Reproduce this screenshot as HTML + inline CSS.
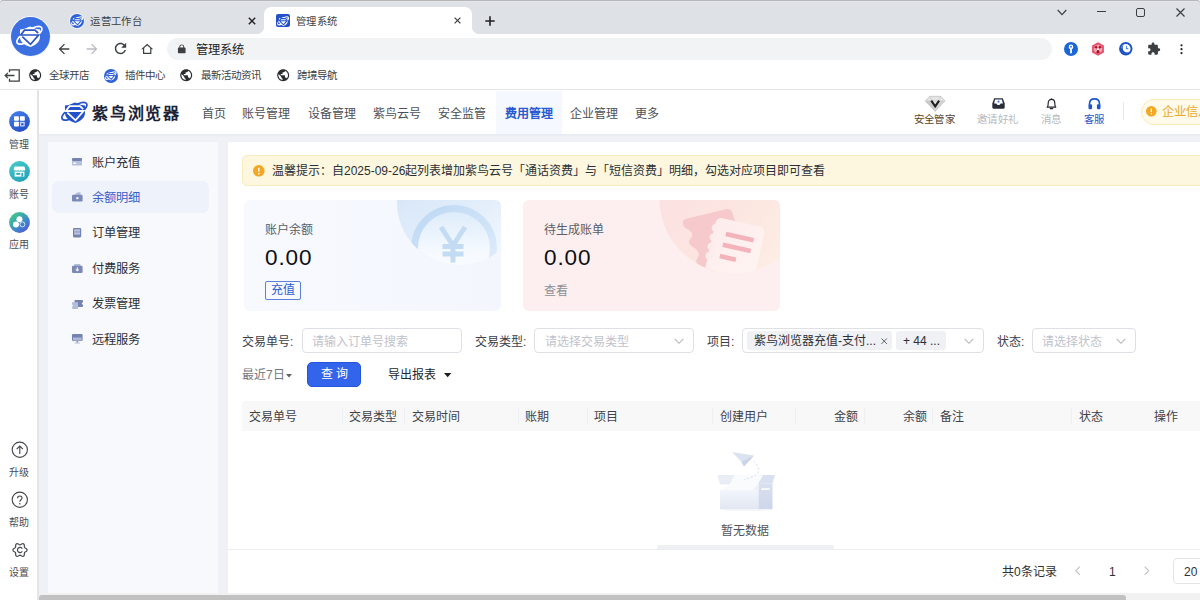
<!DOCTYPE html>
<html lang="zh-CN">
<head>
<meta charset="utf-8">
<title>管理系统</title>
<style>
*{box-sizing:border-box;margin:0;padding:0}
html,body{width:1200px;height:600px;overflow:hidden;background:#fff}
body{font-family:"Liberation Sans",sans-serif;font-size:12.25px;color:#303133;position:relative}
.a{position:absolute;white-space:nowrap}
.t{position:absolute;white-space:nowrap;line-height:16px;height:16px}
.j{text-align-last:justify}
svg{position:absolute;overflow:visible}
/* ---------- browser chrome ---------- */
#tabstrip{left:0;top:0;width:1200px;height:34px;background:#dee1e6;border-radius:3px 3px 0 0;box-shadow:inset 0 1px 0 #b4b6ba,inset 0 2px 0 #e5e7ea}
#tabact{left:264px;top:7px;width:208px;height:27px;background:#fff;border-radius:7px 7px 0 0}
#toolbar{left:0;top:34px;width:1200px;height:28px;background:#fff}
#omni{left:167px;top:38px;width:885px;height:22px;border-radius:11px;background:#f1f3f4}
#bookbar{left:0;top:62px;width:1200px;height:28px;background:#fff;border-bottom:1px solid #e4e6ea}
.tabt{letter-spacing:.35px;font-size:10.3px;color:#3c4043}
.bm{letter-spacing:.2px;font-size:10.5px;color:#3c4043}
/* ---------- left app rail ---------- */
#rail{left:0;top:90px;width:38px;height:510px;background:#fff}
#railline{left:37.3px;top:90px;width:1.7px;height:510px;background:#e3e5e9}
.rl{font-size:10px;color:#4a4d52;width:38px;text-align:center;left:0}
/* ---------- page ---------- */
#page{left:39px;top:90px;width:1161px;height:503px;background:#f0f1f6}
#hdr{left:39px;top:90px;width:1161px;height:43.7px;background:#fff;box-shadow:0 1px 2px rgba(160,170,195,.12)}
.nav{font-size:12px;color:#4b4f56;top:106px}
#side{left:47.7px;top:142.3px;width:170.5px;height:451px;background:#f8f9fd}
#sel{left:52px;top:181px;width:157px;height:32px;border-radius:7px;background:#eef2fb}
.mi{left:92px;font-size:12.25px;color:#2b2f36}
#main{left:227.7px;top:142.3px;width:973px;height:451px;background:#fff}
/* main content */
#alert{left:242px;top:154.8px;width:980px;height:31.6px;background:#fdf7df;border:1px solid #f8ebbd;border-radius:5px}
.card{top:200px;width:257px;height:110.6px;border-radius:6px;overflow:hidden}
#c1{left:244px;background:linear-gradient(90deg,#f7f9fe,#f3f7fd)}
#c2{left:523.2px;background:#fdeff0}
.cl{font-size:12px;color:#5a5e66}
.cv{font-size:22.5px;color:#0d0f12;line-height:26px;height:26px;letter-spacing:.9px}
.fl{font-size:12px;color:#3d4047;top:334.2px}
.inp{top:328.3px;height:24.8px;border:1px solid #dee0e5;border-radius:4px;background:#fff}
.ph{font-size:12px;color:#bfc3cb;top:334px}
.tag{top:331px;height:19px;background:#f0f1f4;border-radius:3px}
#th{left:242px;top:400.5px;width:958px;height:30px;background:#f8f8f9;border-radius:4px 0 0 0}
.th{font-size:12px;font-weight:500;color:#3f4247;top:409px}
.sep{top:407.5px;width:1px;height:16px;background:#eef0f3}
#pgline{left:228px;top:549px;width:972px;height:1px;background:#ebedf0}
#hs{left:657px;top:545px;width:177px;height:4px;background:#eff0f3;border-radius:2px 2px 0 0}
.pg{font-size:12px;color:#303133;top:563.7px}
#sbtrack{left:39px;top:593.4px;width:1161px;height:7px;background:#f1f1f1}
#sbthumb{left:39px;top:594.6px;width:1087px;height:6px;background:#c1c1c1;border-radius:3px 3px 0 0}
</style>
</head>
<body>
<!-- ======= Browser chrome ======= -->
<div class="a" id="tabstrip"></div>
<div class="a" id="tabact"></div>
<div class="a" style="left:257px;top:27px;width:7px;height:7px;background:radial-gradient(circle at 0 0,#dee1e6 6.6px,#fff 7.2px)"></div>
<div class="a" style="left:472px;top:27px;width:7px;height:7px;background:radial-gradient(circle at 100% 0,#dee1e6 6.6px,#fff 7.2px)"></div>
<div class="a" id="toolbar"></div>
<div class="a" id="omni"></div>
<div class="a" id="bookbar"></div>
<div class="t tabt j" style="left:90.2px;top:14.3px;width:51.75px">运营工作台</div>
<div class="t tabt j" style="left:296px;top:14.3px;width:41.41px">管理系统</div>
<div class="t j" style="left:195.7px;top:42.2px;font-size:12.25px;color:#202124;width:48.00px">管理系统</div>
<div class="t bm j" style="left:48.5px;top:67.4px;width:40.82px">全球开店</div>
<div class="t bm j" style="left:124.5px;top:67.4px;width:40.82px">插件中心</div>
<div class="t bm j" style="left:200.5px;top:67.4px;width:61.21px">最新活动资讯</div>
<div class="t bm j" style="left:296.5px;top:67.4px;width:40.82px">跨境导航</div>


<!-- ======= Chrome icons ======= -->
<div class="a" style="left:10px;top:15.8px;width:41px;height:41px;border-radius:50%;background:#f4f6fb"></div>
<div class="a" style="left:11px;top:16.8px;width:39px;height:39px;border-radius:50%;background:#3b6fe2"></div>
<svg style="left:11.4px;top:21.6px;width:40.00px;height:30.00px" viewBox="0 0 40 30"><ellipse cx="18.4" cy="13.3" rx="14.4" ry="5.2" transform="rotate(-32 18.4 13.3)" fill="none" stroke="#fff" stroke-width="1.7"/><path d="M9,7.5 Q14,7 19,4.5 Q24,7 29,7.5 V15 C29,20 24,23.5 19.5,25 C14,23.5 9,20 9,15 Z" fill="#fff"/><path d="M27.2,11.2 L24,8.2 H13.5 L9.8,13 H27.6 L19.5,22.3 L11.3,14.6" fill="none" stroke="#2a55c4" stroke-width="1.7"/></svg>
<div class="a" style="left:69px;top:12.5px;width:16px;height:16px;border-radius:50%;background:#eef1f8"></div>
<div class="a" style="left:70px;top:13.5px;width:14px;height:14px;border-radius:50%;background:#2f62d8"></div>
<svg style="left:68.9px;top:14.65px;width:17.60px;height:13.20px" viewBox="0 0 40 30"><ellipse cx="18.4" cy="13.3" rx="14.4" ry="5.2" transform="rotate(-32 18.4 13.3)" fill="none" stroke="#fff" stroke-width="2.4"/><path d="M9,7.5 Q14,7 19,4.5 Q24,7 29,7.5 V15 C29,20 24,23.5 19.5,25 C14,23.5 9,20 9,15 Z" fill="#fff"/><path d="M27.2,11.2 L24,8.2 H13.5 L9.8,13 H27.6 L19.5,22.3 L11.3,14.6" fill="none" stroke="#2f62d8" stroke-width="2.5"/></svg>
<div class="a" style="left:276px;top:14px;width:14px;height:13px;border-radius:2px;background:#2351c6"></div>
<svg style="left:274.9px;top:14.65px;width:17.60px;height:13.20px" viewBox="0 0 40 30"><ellipse cx="18.4" cy="13.3" rx="14.4" ry="5.2" transform="rotate(-32 18.4 13.3)" fill="none" stroke="#fff" stroke-width="2.4"/><path d="M9,7.5 Q14,7 19,4.5 Q24,7 29,7.5 V15 C29,20 24,23.5 19.5,25 C14,23.5 9,20 9,15 Z" fill="#fff"/><path d="M27.2,11.2 L24,8.2 H13.5 L9.8,13 H27.6 L19.5,22.3 L11.3,14.6" fill="none" stroke="#2351c6" stroke-width="2.5"/></svg>
<div class="a" style="left:103.5px;top:69px;width:14px;height:14px;border-radius:50%;background:#2f62d8"></div>
<svg style="left:102.9px;top:70.4px;width:16.80px;height:12.60px" viewBox="0 0 40 30"><ellipse cx="18.4" cy="13.3" rx="14.4" ry="5.2" transform="rotate(-32 18.4 13.3)" fill="none" stroke="#fff" stroke-width="2.4"/><path d="M9,7.5 Q14,7 19,4.5 Q24,7 29,7.5 V15 C29,20 24,23.5 19.5,25 C14,23.5 9,20 9,15 Z" fill="#fff"/><path d="M27.2,11.2 L24,8.2 H13.5 L9.8,13 H27.6 L19.5,22.3 L11.3,14.6" fill="none" stroke="#2f62d8" stroke-width="2.5"/></svg>
<svg style="left:248px;top:16.5px;width:8px;height:8px" viewBox="0 0 8 8"><path d="M0.8,0.8 L7.2,7.2 M7.2,0.8 L0.8,7.2" stroke="#202124" stroke-width="1.4"/></svg>
<svg style="left:454px;top:17px;width:7px;height:7px" viewBox="0 0 7 7"><path d="M0.6,0.6 L6.4,6.4 M6.4,0.6 L0.6,6.4" stroke="#3c4043" stroke-width="1.2"/></svg>
<svg style="left:485px;top:15.5px;width:10px;height:10px" viewBox="0 0 10 10"><path d="M5,0.3 V9.7 M0.3,5 H9.7" stroke="#202124" stroke-width="1.6"/></svg>
<!-- window controls -->
<svg style="left:1057px;top:8.5px;width:10px;height:7px" viewBox="0 0 10 7"><path d="M0.7,1 L5,5.6 L9.3,1" fill="none" stroke="#3c4043" stroke-width="1.2"/></svg>
<div class="a" style="left:1097px;top:11px;width:9px;height:1.4px;background:#3c4043"></div>
<div class="a" style="left:1136px;top:7.5px;width:9px;height:9px;border:1.2px solid #3c4043;border-radius:2px"></div>
<svg style="left:1176px;top:7.5px;width:9px;height:9px" viewBox="0 0 9 9"><path d="M0.5,0.5 L8.5,8.5 M8.5,0.5 L0.5,8.5" stroke="#3c4043" stroke-width="1.2"/></svg>
<!-- nav buttons -->
<svg style="left:56.2px;top:40.7px;width:16px;height:16px" viewBox="0 0 24 24"><path fill="#3c4043" d="M20 11H7.83l5.59-5.59L12 4l-8 8 8 8 1.41-1.41L7.83 13H20v-2z"/></svg>
<svg style="left:84.4px;top:40.7px;width:16px;height:16px" viewBox="0 0 24 24"><path fill="#b9bcc0" d="M12 4l-1.41 1.41L16.17 11H4v2h12.17l-5.58 5.59L12 20l8-8z"/></svg>
<svg style="left:111.5px;top:40px;width:17px;height:17px" viewBox="0 0 24 24"><path fill="#3c4043" d="M17.65 6.35C16.2 4.9 14.21 4 12 4c-4.42 0-7.99 3.58-7.99 8s3.57 8 7.99 8c3.73 0 6.84-2.55 7.73-6h-2.08c-.82 2.33-3.04 4-5.65 4-3.31 0-6-2.69-6-6s2.69-6 6-6c1.66 0 3.14.69 4.22 1.78L13 11h7V4l-2.35 2.35z"/></svg>
<svg style="left:140.2px;top:41.8px;width:14.4px;height:14.4px" viewBox="0 0 24 24"><path fill="#3c4043" d="M12 5.69l5 4.5V18H7v-7.81l5-4.5M12 3L2 12h3v8h14v-8h3L12 3z"/></svg>
<svg style="left:175.9px;top:44.2px;width:11.5px;height:10.2px" viewBox="0 0 24 24" preserveAspectRatio="none"><path fill="#3c4043" d="M18 8h-1V6c0-2.76-2.24-5-5-5S7 3.24 7 6v2H6c-1.1 0-2 .9-2 2v10c0 1.1.9 2 2 2h12c1.1 0 2-.9 2-2V10c0-1.1-.9-2-2-2zm-2.9 0H8.9V6c0-1.71 1.39-3.1 3.1-3.1 1.71 0 3.1 1.39 3.1 3.1v2z"/></svg>
<!-- extensions -->
<svg style="left:1064px;top:42px;width:14px;height:14px" viewBox="0 0 14 14"><circle cx="7" cy="7" r="7" fill="#1b66d6"/><circle cx="7" cy="4.9" r="2.3" fill="#fff"/><rect x="6.1" y="6" width="1.8" height="5.3" fill="#fff"/><circle cx="7" cy="4.7" r="0.9" fill="#1b66d6"/></svg>
<svg style="left:1091.4px;top:42px;width:14px;height:14px" viewBox="0 0 14 14"><path d="M7,0.2 L12.9,3.6 V10.4 L7,13.8 L1.1,10.4 V3.6 Z" fill="#e5506a"/><circle cx="7" cy="7" r="4.300" fill="#f3a3b1"/><path d="M7,7 L3.300,5.800 A3.900,3.900 0 0 1 5.600,3.400 Z M7,7 L8.400,3.400 A3.900,3.900 0 0 1 10.700,5.800 Z M7,7 L8.900,10.400 A3.900,3.900 0 0 1 5.100,10.400 Z" fill="#a5122c"/><circle cx="7" cy="7" r="1" fill="#fff"/></svg>
<svg style="left:1119.2px;top:42.2px;width:13.6px;height:13.6px" viewBox="0 0 14 14"><circle cx="7" cy="7" r="6.900" fill="#1a52c2"/><circle cx="7" cy="7" r="4.900" fill="#fff"/><path d="M2.400,5.600 A4.700,4.700 0 0 0 11,9.600 A4.300,4.300 0 0 1 5.200,3.200 A4.700,4.700 0 0 0 2.400,5.600 Z" fill="#1a52c2"/><path d="M7.600,3.800 V6.800 H9.600" fill="none" stroke="#4f8fea" stroke-width="1.100"/></svg>
<svg style="left:1146.7px;top:42px;width:13.8px;height:13.8px" viewBox="0 0 24 24"><path fill="#3c4043" d="M20.5 11H19V7c0-1.1-.9-2-2-2h-4V3.5C13 2.12 11.88 1 10.5 1S8 2.12 8 3.5V5H4c-1.1 0-1.99.9-1.99 2v3.8H3.5c1.49 0 2.7 1.21 2.7 2.7s-1.21 2.7-2.7 2.7H2V20c0 1.1.9 2 2 2h3.8v-1.5c0-1.49 1.21-2.7 2.7-2.7 1.49 0 2.7 1.21 2.7 2.7V22H17c1.1 0 2-.9 2-2v-4h1.5c1.38 0 2.5-1.12 2.5-2.5S21.88 11 20.5 11z"/></svg>
<svg style="left:1179.5px;top:44px;width:3px;height:11px" viewBox="0 0 3 11"><circle cx="1.5" cy="1.3" r="1.1" fill="#202124"/><circle cx="1.5" cy="5.2" r="1.1" fill="#202124"/><circle cx="1.5" cy="9.1" r="1.1" fill="#202124"/></svg>
<!-- bookmarks -->
<svg style="left:3.5px;top:68.5px;width:16px;height:13px" viewBox="0 0 16 13"><path d="M5.5,3.2 V0.8 H15.2 V12.2 H5.5 V9.8" fill="none" stroke="#3c4043" stroke-width="1.3"/><path d="M10.5,6.5 H1.2 M3.9,3.9 L1.2,6.5 L3.9,9.1" fill="none" stroke="#3c4043" stroke-width="1.3"/></svg>
<svg style="left:27.8px;top:68.3px;width:14.4px;height:14.4px" viewBox="0 0 24 24"><path fill="#2b2d30" d="M12 2C6.48 2 2 6.48 2 12s4.48 10 10 10 10-4.48 10-10S17.52 2 12 2zm-1 17.93c-3.950-.49-7-3.850-7-7.930 0-.62.080-1.210.210-1.790L9 15v1c0 1.100.9 2 2 2v1.930zm6.900-2.540c-.26-.81-1-1.390-1.900-1.390h-1v-3c0-.55-.45-1-1-1H8v-2h2c.55 0 1-.45 1-1V7h2c1.100 0 2-.9 2-2v-.41c2.930 1.190 5 4.060 5 7.410 0 2.080-.8 3.970-2.100 5.390z"/></svg>
<svg style="left:178.8px;top:68.3px;width:14.4px;height:14.4px" viewBox="0 0 24 24"><path fill="#2b2d30" d="M12 2C6.48 2 2 6.48 2 12s4.48 10 10 10 10-4.48 10-10S17.52 2 12 2zm-1 17.93c-3.950-.49-7-3.850-7-7.930 0-.62.080-1.210.210-1.790L9 15v1c0 1.100.9 2 2 2v1.930zm6.900-2.540c-.26-.81-1-1.390-1.900-1.390h-1v-3c0-.55-.45-1-1-1H8v-2h2c.55 0 1-.45 1-1V7h2c1.100 0 2-.9 2-2v-.41c2.930 1.190 5 4.060 5 7.410 0 2.080-.8 3.970-2.100 5.390z"/></svg>
<svg style="left:275.8px;top:68.3px;width:14.4px;height:14.4px" viewBox="0 0 24 24"><path fill="#2b2d30" d="M12 2C6.48 2 2 6.48 2 12s4.48 10 10 10 10-4.48 10-10S17.52 2 12 2zm-1 17.93c-3.950-.49-7-3.850-7-7.930 0-.62.080-1.210.210-1.790L9 15v1c0 1.100.9 2 2 2v1.930zm6.900-2.540c-.26-.81-1-1.390-1.900-1.390h-1v-3c0-.55-.45-1-1-1H8v-2h2c.55 0 1-.45 1-1V7h2c1.100 0 2-.9 2-2v-.41c2.930 1.190 5 4.060 5 7.410 0 2.080-.8 3.970-2.100 5.390z"/></svg>

<!-- ======= Left rail ======= -->
<div class="a" id="rail"></div>
<div class="a" id="railline"></div>
<div class="t rl j" style="top:136.8px;left:9.00px;width:20.00px">管理</div>
<div class="t rl j" style="top:186.8px;left:9.00px;width:20.00px">账号</div>
<div class="t rl j" style="top:236.8px;left:9.00px;width:20.00px">应用</div>
<div class="t rl j" style="top:464.8px;left:9.00px;width:20.00px">升级</div>
<div class="t rl j" style="top:514.8px;left:9.00px;width:20.00px">帮助</div>
<div class="t rl j" style="top:564.8px;left:9.00px;width:20.00px">设置</div>


<!-- rail icons -->
<svg style="left:9.1px;top:111.3px;width:21px;height:21px" viewBox="0 0 21 21"><defs><linearGradient id="g1" x1="0" y1="0" x2="0.6" y2="1"><stop offset="0" stop-color="#4684ee"/><stop offset="1" stop-color="#2750c8"/></linearGradient></defs><circle cx="10.5" cy="10.5" r="10.4" fill="url(#g1)"/><rect x="5" y="5.2" width="4.9" height="4.6" rx=".7" fill="#fff"/><rect x="10.9" y="5.2" width="4.9" height="4.6" rx=".7" fill="#fff"/><rect x="5" y="10.8" width="4.9" height="4.6" rx=".7" fill="#fff"/><rect x="10.9" y="10.8" width="4.9" height="4.6" rx=".7" fill="#bcd0fa"/><path d="M12.3,12.2 h1.6 l1,1 -1,1 h-1.6z" fill="#2750c8"/></svg>
<svg style="left:9.1px;top:161.3px;width:21px;height:21px" viewBox="0 0 21 21"><defs><linearGradient id="g2" x1="0" y1="0" x2="0.6" y2="1"><stop offset="0" stop-color="#45cfd0"/><stop offset="1" stop-color="#27a3b6"/></linearGradient></defs><circle cx="10.5" cy="10.5" r="10.4" fill="url(#g2)"/><path d="M5.6,5.6 H15.4 L16.3,8.3 C16.3,9.6 15.2,9.9 14.4,9.3 C13.6,9.9 12.6,9.9 11.8,9.3 C11,9.9 10,9.9 9.2,9.3 C8.4,9.9 7.4,9.9 6.6,9.3 C5.8,9.9 4.7,9.6 4.7,8.3 Z" fill="#fff"/><path d="M5.6,10.6 H15.4 V15.6 H5.6 Z" fill="#fff"/><rect x="7.3" y="11.9" width="4" height="1.9" fill="#2aa9ba"/><rect x="12.4" y="11.9" width="1.6" height="3.7" fill="#2aa9ba"/></svg>
<svg style="left:9.1px;top:211.5px;width:21px;height:21px" viewBox="0 0 21 21"><defs><linearGradient id="g3" x1="0.15" y1="0.1" x2="0.85" y2="0.95"><stop offset="0" stop-color="#3fc98a"/><stop offset=".55" stop-color="#3d8fc4"/><stop offset="1" stop-color="#5157dc"/></linearGradient></defs><circle cx="10.5" cy="10.5" r="10.4" fill="url(#g3)"/><circle cx="10.4" cy="7.2" r="3" fill="#fff"/><circle cx="7" cy="12.4" r="3" fill="#fff"/><circle cx="13.4" cy="12.4" r="2.5" fill="none" stroke="#cfe0fb" stroke-width="1"/></svg>
<svg style="left:10.5px;top:441.3px;width:17.6px;height:17.6px" viewBox="0 0 18 18"><circle cx="9" cy="9" r="7.8" fill="none" stroke="#45484d" stroke-width="1.15"/><path d="M9,13.2 V5.4 M5.8,8.4 L9,5.2 L12.2,8.4" fill="none" stroke="#45484d" stroke-width="1.15"/></svg>
<svg style="left:10.5px;top:490.9px;width:17.6px;height:17.6px" viewBox="0 0 18 18"><circle cx="9" cy="9" r="7.8" fill="none" stroke="#45484d" stroke-width="1.15"/><path d="M6.7,7.3 C6.7,4.3 11.4,4.4 11.3,7.2 C11.2,8.9 9,9 9,10.9" fill="none" stroke="#45484d" stroke-width="1.15"/><circle cx="9" cy="13" r=".8" fill="#45484d"/></svg>
<svg style="left:10.5px;top:540.9px;width:18px;height:18px" viewBox="0 0 18 18"><path d="M16.10,9.00 L15.95,9.61 L15.52,10.15 L14.94,10.59 L14.33,10.94 L13.83,11.25 L13.50,11.60 L13.36,12.06 L13.35,12.65 L13.35,13.35 L13.26,14.08 L13.00,14.71 L12.55,15.15 L11.95,15.32 L11.27,15.23 L10.59,14.94 L9.99,14.59 L9.46,14.31 L9.00,14.20 L8.54,14.31 L8.01,14.59 L7.41,14.94 L6.73,15.23 L6.05,15.32 L5.45,15.15 L5.00,14.71 L4.74,14.08 L4.65,13.35 L4.65,12.65 L4.64,12.06 L4.50,11.60 L4.17,11.25 L3.67,10.94 L3.06,10.59 L2.48,10.15 L2.05,9.61 L1.90,9.00 L2.05,8.39 L2.48,7.85 L3.06,7.41 L3.67,7.06 L4.17,6.75 L4.50,6.40 L4.64,5.94 L4.65,5.35 L4.65,4.65 L4.74,3.92 L5.00,3.29 L5.45,2.85 L6.05,2.68 L6.73,2.77 L7.41,3.06 L8.01,3.41 L8.54,3.69 L9.00,3.80 L9.46,3.69 L9.99,3.41 L10.59,3.06 L11.27,2.77 L11.95,2.68 L12.55,2.85 L13.00,3.29 L13.26,3.92 L13.35,4.65 L13.35,5.35 L13.36,5.94 L13.50,6.40 L13.83,6.75 L14.33,7.06 L14.94,7.41 L15.52,7.85 L15.95,8.39 Z" fill="none" stroke="#45484d" stroke-width="1.2" stroke-linejoin="round"/><path d="M11.3,7.7 A2.6,2.6 0 1 0 11.3,10.3" fill="none" stroke="#45484d" stroke-width="1.2"/></svg>

<!-- ======= Page ======= -->
<div class="a" id="page"></div>
<div class="a" id="hdr"></div>
<div class="a" style="left:496px;top:91px;width:65.5px;height:42.7px;background:#f5f8fe"></div>
<div class="t nav j" style="left:201.5px;width:24.00px">首页</div>
<div class="t nav j" style="left:242px;width:48.00px">账号管理</div>
<div class="t nav j" style="left:308px;width:48.00px">设备管理</div>
<div class="t nav j" style="left:373px;width:48.00px">紫鸟云号</div>
<div class="t nav j" style="left:438px;width:48.00px">安全监管</div>
<div class="t nav j" style="left:504.5px;color:#2a5ad0;font-weight:bold;width:48.00px">费用管理</div>
<div class="t nav j" style="left:570px;width:48.00px">企业管理</div>
<div class="t nav j" style="left:635px;width:24.00px">更多</div>


<!-- header logo -->
<svg style="left:56.0px;top:98.0px;width:40.00px;height:30.00px" viewBox="0 0 40 30"><ellipse cx="18.4" cy="13.3" rx="14.4" ry="5.2" transform="rotate(-32 18.4 13.3)" fill="none" stroke="#2452c8" stroke-width="1.7"/><path d="M9,7.5 Q14,7 19,4.5 Q24,7 29,7.5 V15 C29,20 24,23.5 19.5,25 C14,23.5 9,20 9,15 Z" fill="#2452c8"/><path d="M27.2,11.2 L24,8.2 H13.5 L9.8,13 H27.6 L19.5,22.3 L11.3,14.6" fill="none" stroke="#fff" stroke-width="1.8"/></svg>
<div class="a" style="left:92px;top:102.2px;font-size:16px;line-height:24px;font-weight:bold;color:#1b2236;letter-spacing:1.8px;white-space:nowrap;width:89px;text-align-last:justify">紫鸟浏览器</div>
<!-- header right -->
<svg style="left:924.5px;top:96px;width:20.4px;height:15.6px" viewBox="0 0 20.4 15.6"><path d="M4.6,0.3 H15.8 L20.1,5 L10.2,15.3 L0.3,5 Z" fill="#e4e4e4" stroke="#b5b5b5" stroke-width=".6"/><path d="M0.3,5 H7 L10.2,15.3 Z" fill="#c9c9c9"/><path d="M20.1,5 H13.4 L10.2,15.3 Z" fill="#d2d2d2"/><path d="M0.3,5 H20.1 M4.6,0.3 L7,5 L10.2,15.3 L13.400,5 L15.8,0.3" fill="none" stroke="#c4c4c4" stroke-width=".6"/><path d="M6.300,4.600 L10.2,10.400 L14.100,4.600" fill="none" stroke="#1d1d1d" stroke-width="2"/></svg>
<div class="t j" style="left:913.5px;top:111.8px;letter-spacing:.4px;font-size:10.4px;font-weight:500;color:#574229;width:41.61px">安全管家</div>
<svg style="left:991.5px;top:98px;width:13px;height:11px" viewBox="0 0 13 11"><path d="M2.2,0.3 H10.8 L12.7,5.6 V9.6 Q12.7,10.700 11.600,10.700 H1.400 Q.3,10.700 .3,9.600 V5.600 Z" fill="#2a2e3a"/><path d="M3.100,1.500 H9.9 L10.900,5.400 H8.600 Q8.300,7 6.500,7 Q4.700,7 4.400,5.400 H2.100 Z" fill="#fff"/><circle cx="6.500" cy="3.700" r="1.100" fill="#4a7be6"/></svg>
<div class="t j" style="left:977px;top:111.8px;letter-spacing:.4px;font-size:10.4px;color:#b4b7bc;width:41.61px">邀请好礼</div>
<svg style="left:1045.5px;top:97.8px;width:11px;height:12px" viewBox="0 0 11 12"><path d="M1.200,9.200 C2.200,8.200 2.200,7.200 2.200,5.200 C2.200,2.900 3.500,1.400 5.500,1.400 C7.500,1.400 8.800,2.900 8.800,5.200 C8.800,7.200 8.800,8.200 9.800,9.200 Z" fill="none" stroke="#24272e" stroke-width="1.200" stroke-linejoin="round"/><path d="M4.300,10.600 H6.700" stroke="#24272e" stroke-width="1.300" stroke-linecap="round"/><circle cx="5.500" cy=".9" r=".7" fill="#24272e"/></svg>
<div class="t j" style="left:1041px;top:111.8px;letter-spacing:.4px;font-size:10.4px;color:#b4b7bc;width:20.82px">消息</div>
<svg style="left:1087.5px;top:98px;width:13px;height:11.5px" viewBox="0 0 13 11.500"><path d="M1.500,7.500 V6 C1.500,2.900 3.600,.9 6.500,.9 C9.400,.9 11.500,2.900 11.500,6 V7.500" fill="none" stroke="#1f55d0" stroke-width="1.600"/><rect x=".5" y="6.200" width="3.600" height="5" rx="1.200" fill="#1f55d0"/><rect x="8.900" y="6.200" width="3.600" height="5" rx="1.200" fill="#1f55d0"/></svg>
<div class="t j" style="left:1084px;top:111.8px;letter-spacing:.4px;font-size:10.4px;color:#2a57c8;width:20.82px">客服</div>
<div class="a" style="left:1122.500px;top:102px;width:1px;height:18px;background:#e6e8ec"></div>
<div class="a" style="left:1140.500px;top:99px;width:90px;height:26px;border-radius:13px;background:#fffaea;border:1px solid #fbeab6"></div>
<svg style="left:1145.700px;top:106px;width:10.600px;height:10.600px" viewBox="0 0 12 12"><circle cx="6" cy="6" r="6" fill="#f4a720"/><rect x="5.300" y="2.600" width="1.400" height="4.400" rx=".5" fill="#fff"/><circle cx="6" cy="8.900" r=".85" fill="#fff"/></svg>
<div class="t j" style="left:1162px;top:104px;font-size:12.3px;color:#e9a92c;width:48.00px">企业信息</div>
<div class="a" id="side"></div>
<div class="a" id="sel"></div>
<div class="t mi j" style="top:154.5px;width:48.00px">账户充值</div>
<div class="t mi j" style="top:189.9px;color:#3a5fc8;width:48.00px">余额明细</div>
<div class="t mi j" style="top:225.3px;width:48.00px">订单管理</div>
<div class="t mi j" style="top:260.7px;width:48.00px">付费服务</div>
<div class="t mi j" style="top:296.1px;width:48.00px">发票管理</div>
<div class="t mi j" style="top:331.5px;width:48.00px">远程服务</div>

<!-- side menu icons -->
<svg style="left:72.300px;top:157.800px;width:10px;height:7.600px" viewBox="0 0 10 7.600"><rect x="0" y="0" width="10" height="7.600" rx="1.200" fill="#b7c0dd"/><rect x="0" y="0" width="10" height="3" rx="1.200" fill="#7683b0"/><rect x="1.200" y="4.600" width="3" height="1.300" fill="#fff"/></svg>
<svg style="left:72.300px;top:192.300px;width:10.600px;height:9.400px" viewBox="0 0 10.600 9.400"><path d="M2.200,3 L5.600,.2 L8.600,.6 V3 Z" fill="#b3bddb"/><rect x="0" y="2.800" width="10.600" height="6.600" rx="1.200" fill="#7d89b5"/><rect x="4.200" y="5" width="2.300" height="2.200" rx=".4" fill="#e8ecf7"/></svg>
<svg style="left:73.400px;top:228.200px;width:8.200px;height:9.400px" viewBox="0 0 8.200 9.400"><rect x="0" y="0" width="8.200" height="9.400" rx="1.100" fill="#7683b0"/><rect x="1.200" y="1.300" width="5.800" height="5.300" fill="#bcc5df"/><rect x="1.200" y="3.500" width="5.800" height=".9" fill="#8995bd"/></svg>
<svg style="left:72.300px;top:263.600px;width:10.600px;height:9px" viewBox="0 0 10.600 9"><path d="M1.600,2 L2.600,0 H8 L9,2 Z" fill="#b3bddb"/><rect x="0" y="1.800" width="10.600" height="7.200" rx="1.200" fill="#7d89b5"/><path d="M5.300,3.300 V6.600 M3.800,5.300 L5.300,6.800 L6.800,5.300" stroke="#eef1fa" stroke-width="1.100" fill="none"/></svg>
<svg style="left:72px;top:299.600px;width:11px;height:9px" viewBox="0 0 11 9"><path d="M2.600,0 H10 Q11,0 11,1 V2.300 Q9.800,2.700 9.800,3.500 Q9.800,4.300 11,4.700 V6 Q11,7 10,7 H2.600 Z" fill="#7683b0"/><path d="M0,2.200 H6 V9 H1 Q0,9 0,8 V6.800 Q1,6.400 1,5.600 Q1,4.800 0,4.400 Z" fill="#b3bddb"/></svg>
<svg style="left:72.200px;top:333.800px;width:10.600px;height:9.600px" viewBox="0 0 10.600 9.600"><rect x="0" y="0" width="10.600" height="6.800" rx=".9" fill="#7683b0"/><rect x="1" y="3.600" width="8.600" height="2.300" fill="#b3bddb"/><rect x="2.600" y="8.400" width="5.400" height="1.200" rx=".5" fill="#b3bddb"/><rect x="4.500" y="6.800" width="1.600" height="1.700" fill="#8592bd"/></svg>
<div class="a" id="main"></div>
<!-- alert -->
<div class="a" id="alert"></div>
<div class="t j" style="left:272px;top:163px;font-size:12px;color:#2c2f35;width:553.40px">温馨提示：自2025-09-26起列表增加紫鸟云号「通话资费」与「短信资费」明细，勾选对应项目即可查看</div>
<svg style="left:253px;top:165px;width:11.600px;height:11.600px" viewBox="0 0 12 12"><circle cx="6" cy="6" r="6" fill="#f5a623"/><rect x="5.300" y="2.500" width="1.400" height="4.500" rx=".5" fill="#fff"/><circle cx="6" cy="9" r=".85" fill="#fff"/></svg>
<!-- cards -->
<div class="a card" id="c1"><svg style="left:0;top:0;width:257px;height:111px" viewBox="0 0 257 111"><defs>
<clipPath id="cc1"><circle cx="215.5" cy="2.5" r="62.5"/></clipPath>
<linearGradient id="cg1" x1="0.1" y1="0" x2="0.75" y2="1"><stop offset="0" stop-color="#cfe2f7"/><stop offset=".55" stop-color="#e0ecfa"/><stop offset="1" stop-color="#f3f8fe"/></linearGradient>
<linearGradient id="cg2" x1="0" y1="0" x2="0" y2="1"><stop offset="0" stop-color="#dcebfa"/><stop offset=".6" stop-color="#f7fbff"/></linearGradient>
<linearGradient id="cg3" x1="0.1" y1="0" x2="0.9" y2="1"><stop offset="0" stop-color="#bfd9f4"/><stop offset=".6" stop-color="#d2e5f8"/><stop offset="1" stop-color="#e8f1fc"/></linearGradient>
</defs>
<circle cx="215.5" cy="2.5" r="62.5" fill="url(#cg1)"/>
<g clip-path="url(#cc1)"><circle cx="210" cy="48" r="39.500" fill="url(#cg2)" stroke="url(#cg3)" stroke-width="7"/>
<path d="M197,27 L209,45.500 L221,27 M198.500,46.500 H219.500 M198.500,54 H219.500 M209,45.500 V62.500" fill="none" stroke="#c4dbf4" stroke-width="5"/></g>
</svg></div>
<div class="a card" id="c2"><svg style="left:0;top:0;width:257px;height:111px" viewBox="0 0 257 111"><defs>
<clipPath id="cc2"><circle cx="210.800" cy="-1" r="74.400"/></clipPath>
<linearGradient id="pg1" x1="0" y1="0.2" x2="1" y2="0.9"><stop offset="0" stop-color="#fbe0e2"/><stop offset=".55" stop-color="#fce6e1"/><stop offset="1" stop-color="#fdf0e4"/></linearGradient>
<linearGradient id="pg2" x1="0" y1="0" x2="1" y2="1"><stop offset="0" stop-color="#fdecec"/><stop offset="1" stop-color="#fff5f2"/></linearGradient>
</defs>
<circle cx="210.800" cy="-1" r="74.400" fill="url(#pg1)"/>
<g clip-path="url(#cc2)">
<path d="M160,22 Q160,19.500 163,18.800 L203,9.200 Q207,8.400 209,11.500 L224,60 L180,76 L176,66 Q171,62 175,57 Q178,52 170,47 Q163,43 168,38 Q172,33 164,29 Q159,26 160,22 Z" fill="#f6c9cd"/>
<g transform="translate(193.800 17) rotate(12.700)"><rect x="0" y="0" width="50" height="62" rx="5.500" fill="url(#pg2)"/>
<circle cx="1" cy="11" r="3.600" fill="#fdecec"/><circle cx="1" cy="20.500" r="3.600" fill="#fdecec"/><circle cx="1" cy="30" r="3.600" fill="#fdecec"/><circle cx="1" cy="39.500" r="3.600" fill="#fdecec"/>
<rect x="12.500" y="12.200" width="28.500" height="4.600" fill="#f4b3ba"/><rect x="12" y="23.500" width="28.500" height="4.600" fill="#f4b3ba"/><rect x="11.500" y="35.200" width="16.500" height="4.600" fill="#f4b3ba"/></g>
</g>
</svg></div>
<div class="t cl j" style="left:265px;top:222px;width:48.00px">账户余额</div>
<div class="t cv" style="left:265px;top:244.7px">0.00</div>
<div class="a" style="left:265px;top:281px;width:36px;height:19px;border:1px solid #5b80d8;border-radius:2px;font-size:12px;line-height:17px;text-align:center;color:#2f5bd0">充值</div>
<div class="t cl j" style="left:544px;top:222px;width:60.00px">待生成账单</div>
<div class="t cv" style="left:544px;top:244.7px">0.00</div>
<div class="t cl j" style="left:544px;top:283px;color:#8c8f95;width:24.00px">查看</div>
<!-- filters -->
<div class="t fl j" style="left:242px;width:51.35px">交易单号:</div>
<div class="a inp" style="left:302px;width:160px"></div>
<div class="t ph j" style="left:312px;width:96.00px">请输入订单号搜索</div>
<div class="t fl j" style="left:475px;width:51.35px">交易类型:</div>
<div class="a inp" style="left:534px;width:160px"></div>
<div class="t ph j" style="left:545px;width:84.00px">请选择交易类型</div>
<div class="t fl j" style="left:707px;width:27.35px">项目:</div>
<div class="a inp" style="left:742px;width:242px"></div>
<div class="a tag" style="left:747px;width:145px"></div>
<div class="t j" style="left:754px;top:333px;font-size:12px;color:#2c2f35;width:122.00px">紫鸟浏览器充值-支付...</div>
<div class="a tag" style="left:896px;width:50px"></div>
<div class="t" style="left:903px;top:333px;font-size:12px;color:#2c2f35">+ 44 ...</div>
<div class="t fl j" style="left:997px;width:27.35px">状态:</div>
<div class="a inp" style="left:1032px;width:104px"></div>
<div class="t ph j" style="left:1042px;width:60.00px">请选择状态</div>
<div class="t fl j" style="left:242px;top:367px;color:#74777d;width:42.69px">最近7日</div>
<div class="a" style="left:307px;top:361.5px;width:54px;height:25.5px;background:#3365ec;border:1px solid #2454d8;border-radius:5px;color:#fff;font-size:12px;font-weight:500;line-height:23.5px;text-align:center;letter-spacing:3px;text-indent:3px">查询</div>
<div class="t fl j" style="left:388px;top:367px;color:#24272c;width:48.00px">导出报表</div>
<svg style="left:673.5px;top:337.500px;width:10px;height:6.500px" viewBox="0 0 10 6.500"><path d="M.7,.8 L5,5.300 L9.300,.8" fill="none" stroke="#b3b7bf" stroke-width="1.100"/></svg>
<svg style="left:964px;top:337.500px;width:10px;height:6.500px" viewBox="0 0 10 6.500"><path d="M.7,.8 L5,5.300 L9.300,.8" fill="none" stroke="#b3b7bf" stroke-width="1.100"/></svg>
<svg style="left:1116px;top:337.500px;width:10px;height:6.500px" viewBox="0 0 10 6.500"><path d="M.7,.8 L5,5.300 L9.300,.8" fill="none" stroke="#b3b7bf" stroke-width="1.100"/></svg>
<svg style="left:880.500px;top:338px;width:6.400px;height:6.400px" viewBox="0 0 6.400 6.400"><path d="M.5,.5 L5.900,5.900 M5.900,.5 L.5,5.900" stroke="#5c6068" stroke-width="1"/></svg>
<svg style="left:286px;top:373.500px;width:6px;height:3.600px" viewBox="0 0 6 3.600"><path d="M0,0 H6 L3,3.600 Z" fill="#5f6369"/></svg>
<svg style="left:444px;top:373px;width:7.400px;height:4.200px" viewBox="0 0 7.400 4.200"><path d="M0,0 H7.400 L3.700,4.200 Z" fill="#1b1d21"/></svg>
<svg style="left:1074.500px;top:566px;width:5.500px;height:9.500px" viewBox="0 0 5.500 9.500"><path d="M4.800,.6 L.8,4.750 L4.800,8.900" fill="none" stroke="#bfc3ca" stroke-width="1.100"/></svg>
<svg style="left:1143.500px;top:566px;width:5.500px;height:9.500px" viewBox="0 0 5.500 9.500"><path d="M.7,.6 L4.700,4.750 L.7,8.900" fill="none" stroke="#bfc3ca" stroke-width="1.100"/></svg>
<svg style="left:715px;top:448px;width:62px;height:64px" viewBox="0 0 62 64"><defs>
<linearGradient id="bx1" x1="0" y1="0" x2="0" y2="1"><stop offset="0" stop-color="#f2f5fb"/><stop offset="1" stop-color="#e2e7f3"/></linearGradient>
<linearGradient id="bx2" x1="0" y1="0" x2="0" y2="1"><stop offset="0" stop-color="#d9e0ef"/><stop offset="1" stop-color="#ced6ea"/></linearGradient></defs>
<ellipse cx="31" cy="61.500" rx="27" ry="1.600" fill="#f3f5f9"/>
<path d="M2.500,27 H19.500 L15,36.500 H5 Z" fill="#e9edf6"/>
<path d="M19.500,27 H48 L43.500,35 L38,42 H5 L15,36.500 Z" fill="#fafbfd"/>
<path d="M48,27 H60 L57.500,35.500 L43.500,35 Z" fill="#d9e0ef"/>
<path d="M5,42 H43.500 V61 H5 Z" fill="url(#bx1)"/>
<path d="M43.500,35 L57.500,35.500 V61 H43.500 Z" fill="url(#bx2)"/>
<path d="M38,42 L43.500,35 V42 Z" fill="#eef1f8"/>
<rect x="46.300" y="40.300" width="8.400" height="1.500" fill="#fff"/>
<path d="M17,4 L39,7.600 L29,18.600 L26.500,14 Z" fill="#dbe3f1"/><path d="M26.500,14 L39,7.600 L29,18.600 Z" fill="#c9d4e8"/>
<path d="M38.500,13 Q46.500,20.500 42,26 Q37.500,29.500 29,31.500" fill="none" stroke="#d8dfed" stroke-width="1" stroke-dasharray="2.200 1.800"/>
</svg>
<svg style="left:1190px;top:592px;width:9px;height:8px" viewBox="0 0 9 8"><path d="M8,1 L2,7 M8,4.500 L5.500,7" stroke="#b9bcc2" stroke-width="1"/></svg>
<!-- table -->
<div class="a" id="th"></div>
<div class="t th j" style="left:249px;width:48.00px">交易单号</div>
<div class="t th j" style="left:349px;width:48.00px">交易类型</div>
<div class="t th j" style="left:412px;width:48.00px">交易时间</div>
<div class="t th j" style="left:525px;width:24.00px">账期</div>
<div class="t th j" style="left:594px;width:24.00px">项目</div>
<div class="t th j" style="left:720px;width:48.00px">创建用户</div>
<div class="t th j" style="left:834px;width:24.00px">金额</div>
<div class="t th j" style="left:903px;width:24.00px">余额</div>
<div class="t th j" style="left:940px;width:24.00px">备注</div>
<div class="t th j" style="left:1079px;width:24.00px">状态</div>
<div class="t th j" style="left:1154px;width:24.00px">操作</div>
<div class="a sep" style="left:342px"></div>
<div class="a sep" style="left:404px"></div>
<div class="a sep" style="left:518px"></div>
<div class="a sep" style="left:587px"></div>
<div class="a sep" style="left:712px"></div>
<div class="a sep" style="left:795px"></div>
<div class="a sep" style="left:864px"></div>
<div class="a sep" style="left:932px"></div>
<div class="a sep" style="left:1071px"></div>
<div class="t j" style="left:721px;top:523px;font-size:12px;color:#50545b;width:48.00px">暂无数据</div>
<div class="a" id="hs"></div>
<div class="a" id="pgline"></div>
<div class="t pg j" style="left:1002px;width:54.69px">共0条记录</div>
<div class="t pg" style="left:1109px">1</div>
<div class="a" style="left:1173px;top:558px;width:40px;height:26px;border:1px solid #e2e4e8;border-radius:4px"></div>
<div class="t pg" style="left:1184px">20</div>
<!-- bottom scrollbar -->
<div class="a" id="sbtrack"></div>
<div class="a" id="sbthumb"></div>
</body>
</html>
